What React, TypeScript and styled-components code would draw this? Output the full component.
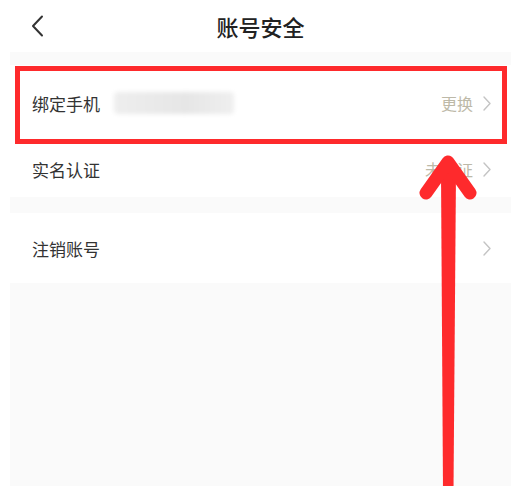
import React from 'react';
import styled, { createGlobalStyle } from 'styled-components';

const GlobalStyle = createGlobalStyle`
  html, body {
    margin: 0;
    padding: 0;
    background: #ffffff;
    font-family: "Noto Sans CJK SC", "Noto Sans", sans-serif;
  }
`;

const Page = styled.div`
  position: relative;
  width: 521px;
  height: 486px;
  overflow: hidden;
  background: #ffffff;
  display: flex;
  flex-direction: column;
`;

const Header = styled.div`
  height: 52px;
  flex: none;
  display: grid;
  grid-template-columns: 80px 1fr 80px;
  align-items: center;
`;

const BackButton = styled.div`
  padding-left: 30px;
  display: flex;
  align-items: center;
`;

const Title = styled.h1`
  margin: 0;
  text-align: center;
  font-size: 22px;
  font-weight: 500;
  color: #222222;
  line-height: 1;
`;

const Body = styled.div`
  flex: 1;
  margin: 0 10px;
  background: #fafafa;
  padding-top: 13px;
  display: flex;
  flex-direction: column;
`;

const Group = styled.div<{ $gap?: number }>`
  background: #ffffff;
  margin-bottom: ${(p) => p.$gap ?? 0}px;
`;

const Row = styled.div<{ $h: number }>`
  height: ${(p) => p.$h}px;
  display: flex;
  align-items: center;
  padding: 0 20px 0 22px;
`;

const Label = styled.span`
  font-size: 17px;
  color: #333333;
  letter-spacing: 0;
`;

const Masked = styled.div`
  width: 120px;
  height: 22px;
  margin-left: 14px;
  border-radius: 4px;
  background: linear-gradient(90deg, #eeeeee 0%, #e6e6e6 60%, #efefef 100%);
  filter: blur(2px);
`;

const Value = styled.span`
  margin-left: auto;
  font-size: 16px;
  color: #bdb9a8;
`;

const Chevron = styled.svg<{ $solo?: boolean }>`
  margin-left: ${(p) => (p.$solo ? 'auto' : '10px')};
  flex: none;
`;

const Highlight = styled.div`
  position: absolute;
  left: 15px;
  top: 66px;
  width: 482px;
  height: 68px;
  border: 5px solid #fe2a2c;
  pointer-events: none;
`;

const ArrowLayer = styled.svg`
  position: absolute;
  left: 0;
  top: 0;
  pointer-events: none;
`;

const RightChevron = ({ solo }: { solo?: boolean }) => (
  <Chevron $solo={solo} width="8" height="15" viewBox="0 0 8 15">
    <path d="M1 1 L7 7.5 L1 14" fill="none" stroke="#c4c4c4" strokeWidth="1.4" strokeLinecap="round" strokeLinejoin="round" />
  </Chevron>
);

export default function App() {
  return (
    <>
      <GlobalStyle />
      <Page>
        <Header>
          <BackButton>
            <svg width="14" height="22" viewBox="0 0 14 22">
              <path d="M12 1.5 L3 11 L12 20.5" fill="none" stroke="#333" strokeWidth="2" strokeLinecap="round" strokeLinejoin="round" />
            </svg>
          </BackButton>
          <Title>账号安全</Title>
          <div />
        </Header>
        <Body>
          <Group $gap={16}>
            <Row $h={76}>
              <Label>绑定手机</Label>
              <Masked />
              <Value>更换</Value>
              <RightChevron />
            </Row>
            <Row $h={56}>
              <Label>实名认证</Label>
              <Value>未认证</Value>
              <RightChevron />
            </Row>
          </Group>
          <Group>
            <Row $h={70}>
              <Label>注销账号</Label>
              <RightChevron solo />
            </Row>
          </Group>
        </Body>
        <Highlight />
        <ArrowLayer width="521" height="486" viewBox="0 0 521 486">
          <polygon points="441,172 456,172 453.5,490 443,490" fill="#fe2a2c" />
          <path d="M426 193 L448 162 L470 193" fill="none" stroke="#fe2a2c" strokeWidth="13" strokeLinecap="round" strokeLinejoin="round" />
        </ArrowLayer>
      </Page>
    </>
  );
}
